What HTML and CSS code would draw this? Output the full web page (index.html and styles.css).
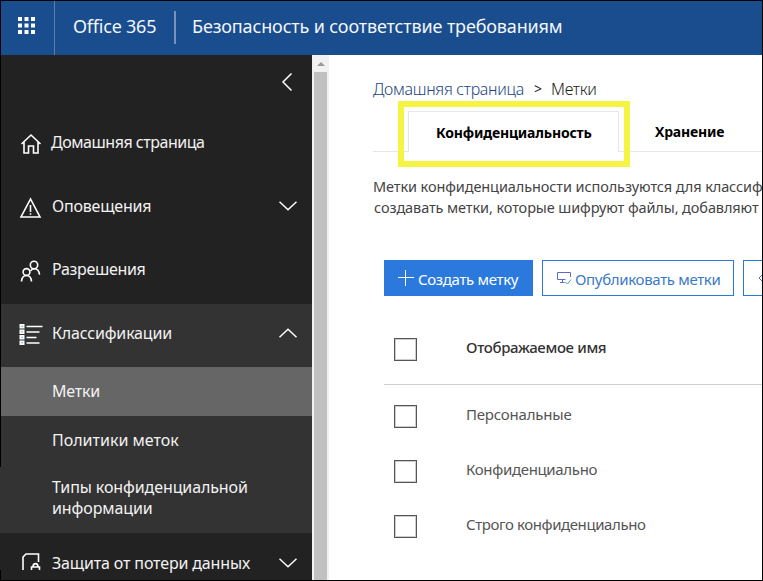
FILE: index.html
```html
<!DOCTYPE html>
<html lang="ru">
<head>
<meta charset="utf-8">
<title>Безопасность и соответствие требованиям</title>
<link rel="stylesheet" href="styles.css">
</head>
<body>
<div class="app">
  <header class="header">
    <div class="launcher">
      <svg width="18" height="18" viewBox="0 0 18 18" fill="#fff"><path d="M0 0h4v4H0zM6.500 0h4v4h-4zM13 0h4v4h-4zM0 6.500h4v4H0zM6.500 6.500h4v4h-4zM13 6.500h4v4h-4zM0 13h4v4H0zM6.500 13h4v4h-4zM13 13h4v4h-4z"/></svg>
    </div>
    <span class="brand">Office 365</span>
    <span class="separator"></span>
    <span class="product">Безопасность и соответствие требованиям</span>
  </header>
  <div class="body">
    <nav class="sidebar">
      <div class="collapse"><svg width="12" height="20" viewBox="0 0 12 20"><path d="M10.500 1.500 2 10l8.500 8.500"/></svg></div>
      <div class="item tall">
        <svg class="icon" width="22" height="22" viewBox="0 0 22 22"><path d="M1.500 11 11 2l9.500 9M4 9v11h4.500v-7h5v7H18V9"/></svg>
        <span class="label home">Домашняя страница</span>
      </div>
      <div class="item">
        <svg class="icon" width="22" height="22" viewBox="0 0 22 22"><path d="M10.500 2 1 20h19zM10.500 8v7M10.500 16.200v1.600"/></svg>
        <span class="label alerts">Оповещения</span>
        <svg class="chevron" width="18" height="10" viewBox="0 0 18 10"><path d="m.5 .8 8.500 8 8.500-8"/></svg>
      </div>
      <div class="item tall">
        <svg class="icon" width="22" height="22" viewBox="0 0 22 22"><circle cx="14" cy="5" r="3.700"/><circle cx="6.500" cy="12" r="3.400"/><path d="M1.500 21.500c.3-3.800 2-6 5-6s4.700 2.200 5 6M10.500 11c.8-1.600 2-2.300 3.700-2.300 3 0 5 2.200 5.300 6"/></svg>
        <span class="label perms">Разрешения</span>
      </div>
      <div class="item open">
        <svg class="icon list" width="23" height="22" viewBox="0 0 23 22"><path fill="#fff" stroke="none" d="M0 0h5v4.500H0zM0 5.500h5V10H0zM0 11h5v4.500H0zM0 16.500h5V21H0z"/><path stroke="#4386b0" stroke-width="1" d="M2 2.300h1.300M2 7.800h1.300M2 13.300h1.300M2 18.800h1.300"/><path d="M7 2.500h16M7 8h13M7 13.500h10M7 19h13"/></svg>
        <span class="label class">Классификации</span>
        <svg class="chevron" width="18" height="10" viewBox="0 0 18 10"><path d="m.5 9.200 8.500-8 8.500 8"/></svg>
      </div>
      <div class="sub active"><span class="labels">Метки</span></div>
      <div class="sub"><span class="policies">Политики меток</span></div>
      <div class="sub types"><span>Типы конфиденциальной<br>информации</span></div>
      <div class="item last">
        <svg class="icon" width="22" height="22" viewBox="0 0 22 22"><path d="M3 18V5l3-3h12.500v8M11.500 18v-3h8v3M13 15c0-4.500 5-4.500 5 0"/></svg>
        <span class="label dlp">Защита от потери данных</span>
        <svg class="chevron" width="18" height="10" viewBox="0 0 18 10"><path d="m.5 .8 8.500 8 8.500-8"/></svg>
      </div>
    </nav>
    <div class="scrollbar"><span class="arrow"></span><span class="thumb"></span></div>
    <main class="content">
      <div class="crumbs"><a class="crumb-home">Домашняя страница</a><span class="gt">&gt;</span><span class="crumb-labels">Метки</span></div>
      <div class="tabs">
        <div class="tab selected"><span class="sensitivity">Конфиденциальность</span><div class="highlight"></div></div>
        <div class="tab"><span class="retention">Хранение</span></div>
      </div>
      <div class="intro"><div class="line1">Метки конфиденциальности используются для классиф</div><div class="line2">создавать метки, которые шифруют файлы, добавляют</div></div>
      <div class="actions">
        <div class="button primary"><svg width="16" height="16" viewBox="0 0 16 16"><path d="M7.500 0v16M0 7.500h16"/></svg><span class="create">Создать метку</span></div>
        <div class="button publish"><svg width="16" height="14" viewBox="0 0 16 14"><path stroke="#5b68cf" d="M14.500 6V1.500H1.500v7h8M4 11.500h4.500M6.500 8.500v3"/><path stroke="#45a0d8" d="m9.500 11 2 2L15 8.500"/></svg><span class="pub">Опубликовать метки</span></div>
        <div class="button more"><svg width="10" height="14" viewBox="0 0 10 14"><path stroke="#5b68cf" d="M8 1 2 7l6 6"/></svg></div>
      </div>
      <div class="row head"><span class="box"></span><span class="name n0">Отображаемое имя</span></div>
      <div class="row"><span class="box"></span><span class="name n1">Персональные</span></div>
      <div class="row"><span class="box"></span><span class="name n2">Конфиденциально</span></div>
      <div class="row"><span class="box"></span><span class="name n3">Строго конфиденциально</span></div>
    </main>
  </div>
</div>
</body>
</html>
```
FILE: styles.css
```css
* { box-sizing: border-box; }
body { margin: 0; font-family: "Noto Sans", sans-serif; overflow: hidden; }
.app {
  width: 763px; height: 581px; overflow: hidden;
  border: 1px solid #000; border-left: 0; padding-left: 1px;
  background: linear-gradient(#000 466px, #333 466px, #333 532px, #222 532px, #222 569px, #000 569px);
}
svg { display: block; flex: none; fill: none; stroke: #fff; }
.header svg { stroke: none; fill: #fff; }
span, a { white-space: nowrap; }

.header { display: flex; height: 54px; background: #194d8d; color: #f3f6fa; font-size: 18px; line-height: 50px; }
.launcher { width: 54px; padding: 16px 0 0 17px; border-right: 1px solid #5c7fad; }
.brand { width: 119px; padding-left: 18px; letter-spacing: -.22px; }
.separator { width: 2px; height: 33px; margin-top: 10px; background: #7594bb; }
.product { padding-left: 16px; letter-spacing: -.15px; }

.body { display: flex; height: 525px; }
.sidebar { width: 311px; flex: none; background: #222; color: #f2f2f2; font-size: 16px; }
.collapse { height: 58px; padding: 17px 0 0 280px; }
.collapse path { stroke-width: 1.5; }
.item { display: flex; align-items: center; height: 63px; padding: 0 15px 6px 18px; }
.item.tall { height: 64px; }
.item.open { background: #333; }
.icon { width: 24px; height: 22px; margin: 4px 9px 0 0; stroke-width: 1.6; }
.label { flex: 1; }
.chevron { stroke-width: 1.5; }
.item.last { padding-bottom: 4px; }
.last .icon { margin-top: 0; }
.home { letter-spacing: -.47px; margin-left: -1px; }
.alerts { letter-spacing: -.2px; }
.perms { letter-spacing: -.32px; }
.class { letter-spacing: -.18px; }
.dlp { letter-spacing: -.15px; }
.sub { height: 49px; padding: 0 0 1px 51px; display: flex; align-items: center; background: #333; line-height: 21px; }
.sub.active { background: #666; }
.labels { letter-spacing: -.2px; }
.sub.types { height: 68px; padding-bottom: 2px; letter-spacing: -.1px; }

.scrollbar { width: 17px; flex: none; background: #f1f1f1; padding: 7px 2px 0; overflow: hidden; }
.arrow { display: block; width: 0; margin: 0 auto 6px; border: 4px solid transparent; border-top: 0; border-bottom-color: #999; }
.thumb { display: block; height: 520px; background: #c1c1c1; }

.content { flex: 1; min-width: 0; padding-left: 44px; background: #fff; overflow: hidden; }
.crumbs { display: flex; height: 56px; padding-top: 23px; line-height: 22px; font-size: 16px; font-weight: 300; color: #222; letter-spacing: -.3px; }
.crumb-home { width: 161px; color: #1c4680; }
.gt { width: 17px; font-size: 14px; font-weight: 400; }
.tabs { display: flex; height: 41px; padding-left: 35px; background: linear-gradient(#e6e6e6, #e6e6e6) 0 40px / 100% 1px no-repeat; font-size: 14px; font-weight: 700; color: #000; line-height: 42px; letter-spacing: -.18px; }
.tab { padding-left: 36px; }
.tab.selected { position: relative; width: 211px; padding-left: 27px; border: 1px solid #e6e6e6; border-bottom: 0; background: #fff; }
.highlight { position: absolute; left: -11px; top: -11px; width: 232px; height: 66px; border: 6px solid #f5f443; }
.intro { height: 108px; padding-top: 24px; font-size: 14.5px; line-height: 21px; color: #444; white-space: nowrap; letter-spacing: -.1px; }
.line2 { padding-left: 1px; }
.actions { display: flex; gap: 9px; padding-left: 11px; height: 36px; }
.button { display: flex; height: 36px; flex: none; border: 1px solid #2b79dc; color: #3c79c5; font-size: 15px; line-height: 38px; letter-spacing: -.33px; }
.primary { width: 149px; padding: 9px 0 0 13px; background: #2b79dc; color: #fff; }
.primary span { margin-top: -10px; padding-left: 4px; }
.publish { width: 192px; padding: 10px 0 0 13px; }
.publish span { padding-left: 3px; margin-top: -11px; }
.more { width: 60px; padding: 10px 0 0 13px; }
.row { display: flex; height: 55px; margin-left: 11px; padding: 16px 0 0 10px; font-size: 15px; color: #555; }
.row.head { height: 89px; padding-top: 42px; margin-bottom: 4px; border-bottom: 1px solid #d0d0d0; color: #333; font-weight: 500; }
.box { width: 23px; height: 23px; flex: none; border: 1px solid #555; outline: 1px solid #ccc; outline-offset: -2px; }
.name { margin-left: 49px; line-height: 19px; }
.n0 { letter-spacing: -.35px; }
.n1 { letter-spacing: -.2px; }
.n2 { letter-spacing: -.33px; }
.n3 { letter-spacing: -.41px; }
```
